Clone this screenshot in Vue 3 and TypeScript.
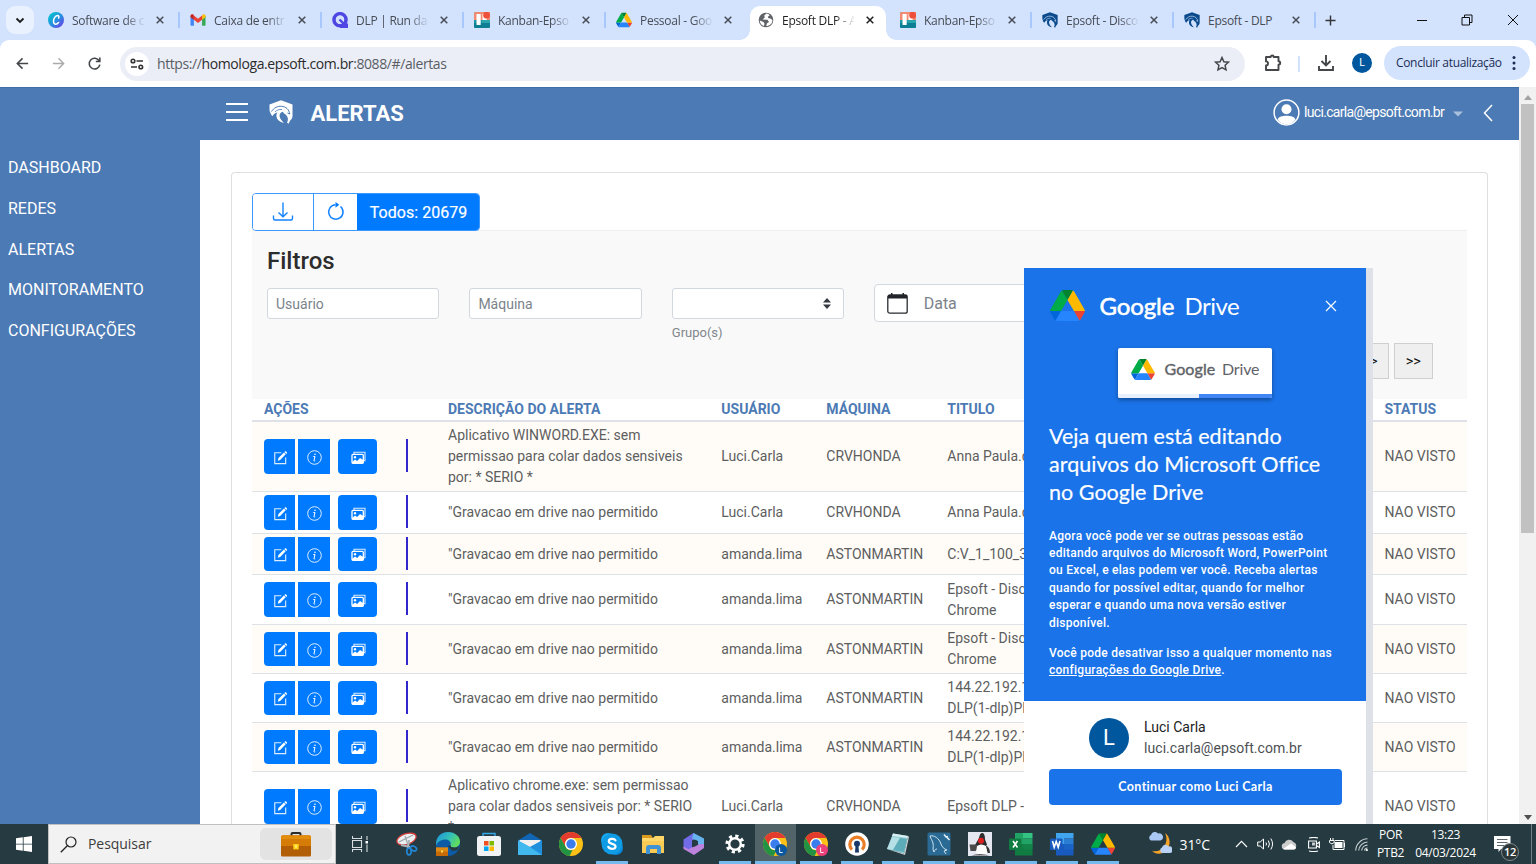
<script setup lang="ts">
interface Tab { title: string; icon: string; active?: boolean; sep?: boolean }
interface Row { h: number; desc: string[]; user: string; machine: string; title: string[] }
interface App { icon: string; open?: boolean; current?: boolean }

const svg = (box: string, body: string): string => `<svg viewBox="${box}" width="100%" height="100%" fill="none" style="display:block">${body}</svg>`

const driveBody =
  '<path d="M6.6 66.85l3.85 6.65c.8 1.4 1.95 2.5 3.3 3.3l13.75-23.8H0c0 1.55.4 3.1 1.2 4.5z" fill="#0066da"/>' +
  '<path d="M43.65 25L29.9 1.2c-1.35.8-2.5 1.9-3.3 3.3L1.2 48.5A9 9 0 0 0 0 53h27.5z" fill="#00ac47"/>' +
  '<path d="M73.55 76.8c1.35-.8 2.5-1.9 3.3-3.3l1.6-2.75 7.65-13.25c.8-1.4 1.2-2.95 1.2-4.5H59.8l5.85 11.5z" fill="#ea4335"/>' +
  '<path d="M43.65 25L57.4 1.2C56.05.4 54.5 0 52.9 0H34.4c-1.6 0-3.15.45-4.5 1.2z" fill="#00832d"/>' +
  '<path d="M59.8 53H27.5L13.75 76.8c1.35.8 2.9 1.2 4.5 1.2h50.8c1.6 0 3.15-.45 4.5-1.2z" fill="#2684fc"/>' +
  '<path d="M73.4 26.5L60.7 4.5c-.8-1.4-1.95-2.5-3.3-3.3L43.65 25 59.8 53h27.45c0-1.55-.4-3.1-1.2-4.5z" fill="#ffba00"/>'
const drive = svg('0 0 87.3 78', driveBody)
const driveSquare = svg('0 -4.6 87.3 87.3', driveBody)

const logo = (shield: string, lines: string): string => svg('0 0 24 24',
  `<path d="M.5 4.500L12 .3l11.500 4.200v11.500c0 2-1.300 3.600-2.300 4.400L19.600 23.700 18 22.500c1.300-2 1.200-4.300 0-6.300-1.200-2-3.300-2.600-4.200-4.400-2 .5-3.400 2-3.200 4.200.2 3 2.400 4.700 4.200 7-4-.9-7.200-3.300-7.400-7 0-1.500.4-2.600 1-3.500-2.300.3-3.700 1.700-5 3.800C2.700 15 1.800 14.500 1.500 13 .6 11.500.5 10 .5 8.500z" fill="${shield}"/>` +
  `<path d="M2.500 11.500C5 7.800 8.500 6 12.500 6.300c4.500.3 7.500 3.200 8.300 7.700l-2.300-1" stroke="${lines}" stroke-width="1"/><path d="M6 12C8 9.800 10 9.300 13 9.500" stroke="${lines}" stroke-width=".8"/>`)
const logoNavy = logo('#0b4a8c', '#d3e3fd')
const logoWhite = logo('#ffffff', '#4c7ab4')

const trello = svg('0 0 16 16',
  '<rect width="16" height="16" rx="1.500" fill="#1b9aa5"/><path d="M0 1.500Q0 0 1.500 0H16v8H0z" fill="#f28b71"/><path d="M0 11h16v3.500q0 1.500-1.500 1.500h-13Q0 16 0 14.500z" fill="#0d7f94"/><path d="M8 8h8v3H8z" fill="#2aa5ac"/><rect x="2.500" y="2" width="4.200" height="11" rx=".5" fill="#fff"/><rect x="8.500" y="2" width="4.200" height="6" rx=".5" fill="#fff"/><circle cx="12.600" cy="3.200" r="3.400" fill="#ee4f3b"/>')
const globe = svg('0 0 16 16',
  '<circle cx="8" cy="8" r="7.300" fill="#5f6368"/><path d="M8.500 1.500L6.200 3.600l.6 1.800L4.500 7.500l5 .3 1.500 2.200-2.200 1.500-.5 2.500C12 14 14.500 11 14.400 8l-2-1.500-2-.3-.5-1.500 1.800-1.500C10.800 2 9.800 1.600 8.500 1.500zM1.700 8.500l3.800 1.500 1 1.800-.5 2.200C3.500 13.200 1.800 11 1.700 8.500z" fill="#fff"/>')
const canva = svg('0 0 16 16',
  '<defs><linearGradient id="cv" x1="0" y1="0" x2="1" y2="1"><stop offset=".1" stop-color="#00c4cc"/><stop offset=".55" stop-color="#2a8be0"/><stop offset="1" stop-color="#7d2ae8"/></linearGradient></defs><circle cx="8" cy="8" r="8" fill="url(#cv)"/><path d="M10.600 6.200c.6-1.200.3-2.600-.8-2.600C7.500 3.600 5.400 6.500 5.500 9.300c.1 3.700 3.200 3.500 5.100 1.200" stroke="#fff" stroke-width="1.500" stroke-linecap="round"/>')
const gmail = svg('0 0 16 16',
  '<path d="M.5 4v9q0 .8.8.8h2.600V6.500z" fill="#4285f4"/><path d="M12.100 6.500v7.300h2.600q.8 0 .8-.8V4z" fill="#34a853"/><path d="M12.100 3.600v4.200L15.500 5.200V4c0-1.600-1.700-2.300-2.800-1.400z" fill="#fbbc04"/><path d="M3.900 7.800V3.600L8 6.700l4.100-3.100v4.200L8 10.900z" fill="#ea4335"/><path d="M.5 4v1.200l3.400 2.600V3.600l-.6-1C2.200 1.700.5 2.400.5 4z" fill="#c5221f"/>')
const runQ = svg('0 0 16 16',
  '<circle cx="8" cy="7.700" r="6" stroke="#5046e4" stroke-width="3.600"/><path d="M8 11.500h8V16h-8z" fill="#5046e4"/><circle cx="8" cy="7.700" r="4.200" fill="#d3e3fd"/><path d="M7.500 7.500l4 4" stroke="#5046e4" stroke-width="2.400"/>')

const tabs: Tab[] = [
  { title: 'Software de c', icon: canva, sep: true },
  { title: 'Caixa de entr', icon: gmail, sep: true },
  { title: 'DLP | Run das', icon: runQ, sep: true },
  { title: 'Kanban-Epso', icon: trello, sep: true },
  { title: 'Pessoal - Goo', icon: driveSquare },
  { title: 'Epsoft DLP - A', icon: globe, active: true },
  { title: 'Kanban-Epso', icon: trello, sep: true },
  { title: 'Epsoft - Disco', icon: logoNavy, sep: true },
  { title: 'Epsoft - DLP', icon: logoNavy, sep: true },
]

const menu: string[] = ['DASHBOARD', 'REDES', 'ALERTAS', 'MONITORAMENTO', 'CONFIGURAÇÕES']

const drv = ['"Gravacao em drive nao permitido']
const rows: Row[] = [
  { h: 70, desc: ['Aplicativo WINWORD.EXE: sem', 'permissao para colar dados sensiveis', 'por: * SERIO *'], user: 'Luci.Carla', machine: 'CRVHONDA', title: ['Anna Paula.docx'] },
  { h: 42, desc: drv, user: 'Luci.Carla', machine: 'CRVHONDA', title: ['Anna Paula.docx'] },
  { h: 41, desc: drv, user: 'amanda.lima', machine: 'ASTONMARTIN', title: ['C:V_1_100_3'] },
  { h: 50, desc: drv, user: 'amanda.lima', machine: 'ASTONMARTIN', title: ['Epsoft - Discover', 'Chrome'] },
  { h: 49, desc: drv, user: 'amanda.lima', machine: 'ASTONMARTIN', title: ['Epsoft - Discover', 'Chrome'] },
  { h: 49, desc: drv, user: 'amanda.lima', machine: 'ASTONMARTIN', title: ['144.22.192.1', 'DLP(1-dlp)PDF'] },
  { h: 49, desc: drv, user: 'amanda.lima', machine: 'ASTONMARTIN', title: ['144.22.192.1', 'DLP(1-dlp)PDF'] },
  { h: 70, desc: ['Aplicativo chrome.exe: sem permissao', 'para colar dados sensiveis por: * SERIO', '*'], user: 'Luci.Carla', machine: 'CRVHONDA', title: ['Epsoft DLP -'] },
]

const chromeBody =
  '<circle cx="12" cy="12" r="12" fill="#fbc116"/><path d="M1.600 6A12 12 0 0 1 22.400 6H12a6 6 0 0 0-5.200 9z" fill="#e33b2e"/><path d="M1.600 6l5.200 9A6 6 0 0 0 13.500 18l-2.900 6A12 12 0 0 1 1.600 6z" fill="#229342"/><circle cx="12" cy="12" r="6" fill="#fff"/><circle cx="12" cy="12" r="4.700" fill="#3b7ded"/>'
const badge = (c: string): string => `<circle cx="18" cy="18" r="6" fill="${c}"/><path d="M16.600 15.500v5h3" stroke="#fff" stroke-width=".9"/>`
const office = (dark: string, a: string, b: string, c: string, d: string, mark: string): string => svg('0 0 24 24',
  `<path d="M6 1h8v11H6z" fill="${a}"/><path d="M14 1h9.500v5.500H14z" fill="${b}"/><path d="M14 6.500h9.500V12H14z" fill="${c}"/><path d="M6 12h17.500v11.500H6z" fill="${dark}"/><path d="M14 12h9.500v5.500H14z" fill="${d}"/><rect y="6.500" width="12.500" height="11.500" rx="1" fill="${dark}"/><path d="${mark}" stroke="#fff" stroke-width="1.600"/>`)

const apps: App[] = [
  { icon: svg('0 0 24 24', '<ellipse cx="11.500" cy="7" rx="10" ry="5.300" transform="rotate(-18 11.500 7)" fill="#eceff1" stroke="#d23b3b" stroke-width="1.300"/><path d="M4 10l14-7M10 4l3 9" stroke="#9aa3a8" stroke-width="1.200"/><path d="M6 13l9 2M14 8l-1 8" stroke="#aab4ba" stroke-width="2"/><ellipse cx="14" cy="19.500" rx="2.200" ry="3.300" stroke="#2287d6" stroke-width="1.700"/><ellipse cx="18.500" cy="16.500" rx="3.200" ry="2.200" transform="rotate(25 18.500 16.500)" stroke="#2287d6" stroke-width="1.700"/>') },
  { icon: svg('0 0 24 24', '<defs><linearGradient id="eg" x1="0" y1="0" x2="1" y2=".5"><stop stop-color="#1c8fe0"/><stop offset=".6" stop-color="#35c1b5"/><stop offset="1" stop-color="#5fdc60"/></linearGradient></defs><circle cx="12" cy="12" r="12" fill="#0d5aa7"/><path d="M0 12C0 4 6 0 12 0c7 0 12 4.500 12 9.500 0 4-3 6-6 6s-4-1.300-3.500-2.300C15.500 10 13 7.500 9.500 7.500 5 7.500 1 10 0 14z" fill="url(#eg)"/><path d="M14.500 13c-.5 1 .5 2.600 3.500 2.600 2 0 3.500-.6 4.700-1.900L22 18l-6 1-4-5z" fill="#263b41"/><rect y="15.500" width="12" height="8.500" rx=".5" fill="#c66b08"/><path d="M0 19.500h12V16q0-.5-.5-.5H0z" fill="#e08a16"/><rect x="5" y="18.500" width="2" height="2" fill="#ffe14a"/>') },
  { icon: svg('0 0 24 24', '<path d="M6 5V1.500h12V5" stroke="#35a8e8" stroke-width="1.400"/><rect y="4" width="24" height="20" rx="2.500" fill="#f0f2f3"/><path d="M7 9h4.500v4.500H7z" fill="#f25022"/><path d="M12.500 9H17v4.500h-4.500z" fill="#7fba00"/><path d="M7 14.500h4.500V19H7z" fill="#00a4ef"/><path d="M12.500 14.500H17V19h-4.500z" fill="#ffb900"/>') },
  { icon: svg('0 0 24 24', '<path d="M0 8.500L12 1l12 7.500V12H0z" fill="#1066b5"/><path d="M1.500 8h21v7h-21z" fill="#f0f0f0"/><path d="M0 8.500l12 6.500 12-6.500V23H0z" fill="#31aee8"/><path d="M0 23h24L12 15 0 8.500z" fill="#41b9ef"/><path d="M24 8.500V23L12 15z" fill="#2090dd"/>') },
  { icon: svg('0 0 24 24', chromeBody) },
  { icon: svg('0 0 24 24', '<circle cx="8" cy="8" r="7" fill="#17a9f2"/><circle cx="16" cy="16" r="7" fill="#0787d7"/><circle cx="12" cy="12" r="10.500" fill="#109ce5"/><path d="M15.500 8.400C14.500 6.300 8.800 6.300 8.800 9.200c0 3.500 6.700 1.800 6.700 5.200 0 3.200-6 3-7.200.4" stroke="#fff" stroke-width="2.200" stroke-linecap="round"/>'), open: true },
  { icon: svg('0 0 24 24', '<path d="M1 3h9l2 3h11v5H1z" fill="#d99a1e"/><path d="M1 6h11l2-2h9v17H1z" fill="#ffd768"/><path d="M1 9h22v12H1z" fill="#f9cb55"/><path d="M5 22v-6q0-3 3-3h9q3 0 3 3v6h-4v-5H9v5z" fill="#3f93d4"/>') },
  { icon: svg('0 0 24 24', '<path d="M11.500 1L17 4.500 10 8.500v8L6.500 18.500 1.500 15.500V7.500z" fill="#716be8"/><path d="M11.500 1L22 6.500v9l-6-3.300V9.500L10 6.500z" fill="#67b3ee"/><path d="M22 12v4l-10 7L1.500 17v-2.500l5 2.700L16 12.200z" fill="#bd83dc"/><path d="M10 9.500l3.500-1.700 2.500 1.500v3.500L12 15l-2-1.500z" fill="#263b41"/>') },
  { icon: svg('0 0 24 24', '<circle cx="12" cy="12" r="5.800" stroke="#fff" stroke-width="2.400"/><circle cx="12" cy="12" r="8" stroke="#fff" stroke-width="3.200" stroke-dasharray="3.140 3.140"/>'), open: true },
  { icon: svg('0 0 24 24', chromeBody + badge('#0b57a0')), open: true, current: true },
  { icon: svg('0 0 24 24', chromeBody + badge('#ec407a')), open: true },
  { icon: svg('0 0 24 24', '<circle cx="12" cy="12" r="11.800" fill="#fff"/><path d="M7 17.500a7.200 7.200 0 1 1 10 0" stroke="#ea7e26" stroke-width="3.200"/><circle cx="12" cy="11.800" r="3" fill="#1a3967"/><path d="M10.600 13h2.800l.6 7.500h-4z" fill="#1a3967"/>'), open: true },
  { icon: svg('0 0 24 24', '<path d="M7 1.500L22 4l-4 17.500L1 17z" fill="#8ccbd5"/><path d="M7 1.500L22 4l-.5 2L6 4z" fill="#d8eef0"/><path d="M6 5l8 1-7 12-6-1z" fill="#b5e0e6"/><path d="M14 6l7 1-3 13-11-2z" fill="#5cacba"/><path d="M1 17l17 4.500L22 4l1 1-4 18z" fill="#c9d3d5"/>'), open: true },
  { icon: svg('0 0 24 24', '<rect x=".5" y=".5" width="23" height="23" rx="1.500" fill="#2a6a94"/><path d="M3 4c4-1 9 2 11 8 1 3 3 5 6 6l-3 1 2 3M3 4c1 3 2 4 3 7 1 4-1 6 1 9 1-2 1-3 3-3" stroke="#cde3ef" stroke-width="1"/><path d="M17 2.500l2 2.500 2-.5M19.500 5l3 3" stroke="#e5f1f8" stroke-width="1.500"/>'), open: true },
  { icon: svg('0 0 24 24', '<rect width="24" height="24" fill="#e4e6f0"/><path d="M11 6q1-5.500 3.500-5T17 7.500l2 5-3 4H9L7 13z" fill="#2c2c2c"/><path d="M1.500 12.500h7l2 3.500-3 3h-5z" fill="#4a4a4a"/><path d="M17 13q5 2 5 8h-2.500z" fill="#333"/><path d="M9 14q4-3 9 0l1.500 7q-5.500 3-11.500 0z" fill="#fbfbfb"/><circle cx="13" cy="8.800" r="3" fill="#df2020"/><path d="M3 23.500q9-3 18 0z" fill="#555"/>'), open: true },
  { icon: office('#107c41', '#21a366', '#33c481', '#21a366', '#13834a', 'M4 9l4.500 6.500M8.500 9L4 15.500'), open: true },
  { icon: office('#185abd', '#41a5ee', '#41a5ee', '#2b7cd3', '#1b63c4', 'M2.500 9l1.700 6.300L6.200 9.500l2 5.800L10 9'), open: true },
  { icon: driveSquare, open: true },
]
</script>

<template>
  <div class="screen">
    <header class="tabstrip">
      <div class="tab-search"><svg width="10" height="7" viewBox="0 0 10 7"><path d="M1.500 1.500L5 5l3.500-3.500" fill="none" stroke="#1f1f1f" stroke-width="1.900" /></svg></div>
      <div v-for="(t, i) in tabs" :key="i" class="tab" :class="{ active: t.active, sep: t.sep }">
        <span class="fav" v-html="t.icon"></span>
        <span class="tab-title" :class="{ whole: i === tabs.length - 1 }">{{ t.title }}</span>
        <svg class="tab-x" viewBox="0 0 8 8"><path d="M.7.7l6.600 6.600M7.300.7L.7 7.300" stroke="currentColor" stroke-width="1.500" /></svg>
      </div>
      <svg class="plus" viewBox="0 0 12 12"><path d="M6 .5v11M.5 6h11" stroke="#35373b" stroke-width="1.600" /></svg>
      <div class="wins">
        <svg viewBox="0 0 12 12"><path d="M1 6.500h10" stroke="#111" /></svg>
        <svg viewBox="0 0 12 12"><path d="M1 3.500h7.500V11H1zM3.500 3V1H11v7.500H9" fill="none" stroke="#111" /></svg>
        <svg viewBox="0 0 12 12"><path d="M1 1l10 10M11 1L1 11" stroke="#111" /></svg>
      </div>
    </header>

    <div class="toolbar">
      <svg class="nav" viewBox="0 0 16 16"><path d="M14 8H3M8 2.500L2.500 8 8 13.500" fill="none" stroke="#44474a" stroke-width="1.700" /></svg>
      <svg class="nav" viewBox="0 0 16 16"><path d="M2 8h11M8 2.500L13.500 8 8 13.500" fill="none" stroke="#aaa" stroke-width="1.500" /></svg>
      <svg class="nav" viewBox="0 0 16 16"><path d="M13 5.200A5.700 5.700 0 1 0 13.700 9.200M13.700 1.500v4.300H9.400" fill="none" stroke="#44474a" stroke-width="1.700" /></svg>
      <div class="omnibox">
        <span class="site"><svg width="14" height="12" viewBox="0 0 14 12"><g fill="none" stroke="#333" stroke-width="1.600"><circle cx="3" cy="3" r="1.800" /><path d="M6.500 3H13M1 9h6" /><circle cx="10.800" cy="9" r="1.800" /></g></svg></span>
        <span class="url">https://<b>homologa.epsoft.com.br</b>:8088/#/alertas</span>
        <svg class="star" viewBox="0 0 16 16"><path d="M8 1.500l1.900 4.200 4.600.5-3.400 3.100.9 4.500L8 11.500l-4 2.300.9-4.500L1.500 6.200l4.600-.5z" fill="none" stroke="#44474a" stroke-width="1.500" /></svg>
      </div>
      <svg class="puzzle" viewBox="0 0 18 18"><path d="M2 3h4.700a1.500 1.500 0 0 1 3 0H14.500v4.300a1.700 1.700 0 0 1 0 3.400v5.300H2v-4.600a2 2 0 0 0 0-4z" fill="none" stroke="#44474a" stroke-width="1.900" stroke-linejoin="round" /></svg>
      <i class="tsep"></i>
      <svg class="dl" viewBox="0 0 18 18"><path d="M9 1v10M4.500 7L9 11.500 13.500 7M2 12v4h14v-4" fill="none" stroke="#44474a" stroke-width="1.900" /></svg>
      <span class="me">L</span>
      <div class="update"><span>Concluir atualização</span><svg width="4" height="16" viewBox="0 0 4 16" fill="#1b2d55"><circle cx="2" cy="2.500" r="1.500" /><circle cx="2" cy="8" r="1.500" /><circle cx="2" cy="13.500" r="1.500" /></svg></div>
    </div>

    <div class="page">
      <nav class="side"><a v-for="m in menu" :key="m">{{ m }}</a></nav>
      <div class="main">
        <header class="top">
          <svg class="burger" viewBox="0 0 22 20"><path d="M.5 2h21M.5 10h21M.5 18h21" stroke="#fff" stroke-width="1.800" stroke-linecap="round" /></svg>
          <span class="brand" v-html="logoWhite"></span>
          <h1>ALERTAS</h1>
          <div class="user">
            <svg width="27" height="27" viewBox="0 0 27 27"><circle cx="13.500" cy="13.500" r="12.400" fill="none" stroke="#fff" stroke-width="1.500" /><circle cx="13.500" cy="10.200" r="5" fill="#fff" /><path d="M4.500 20.500C6 17.500 9 16.800 13.500 16.800s7.500.7 9 3.700C20 24 17 25.200 13.500 25.200S7 24 4.500 20.500z" fill="#fff" /></svg>
            <span>luci.carla@epsoft.com.br</span>
            <svg class="caret" viewBox="0 0 10 6"><path d="M0 .5h10L5 5.500z" fill="#a9c0dc" /></svg>
            <svg class="back" viewBox="0 0 10 18"><path d="M9 1L1.500 9 9 17" fill="none" stroke="#fff" stroke-width="1.500" /></svg>
          </div>
        </header>

        <div class="content">
          <section class="card">
            <div class="group">
              <button class="b1"><svg width="22" height="20" viewBox="0 0 22 20"><path d="M11 .5v14M6.500 10.500l4.500 4.200 4.500-4.200M1.500 13.500v3q0 1.500 1.500 1.500h16q1.500 0 1.500-1.500v-3" fill="none" stroke="#1583ff" stroke-width="1.400" /></svg></button>
              <button class="b2"><svg width="18" height="20" viewBox="0 0 18 20"><path d="M13.500 4.500A7.200 7.200 0 1 1 8.500 2.800" fill="none" stroke="#1583ff" stroke-width="1.500" /><path d="M8.500 0l3.800 2.800-3.800 3z" fill="#007bff" /></svg></button>
              <button class="b3">Todos: 20679</button>
            </div>
            <div class="filters">
              <h2>Filtros</h2>
              <div class="fields">
                <div class="field"><div class="inp">Usuário</div></div>
                <div class="field"><div class="inp">Máquina</div></div>
                <div class="field"><div class="inp sel"><svg width="8" height="11" viewBox="0 0 8 11" fill="#343a40"><path d="M0 4.600L4 0l4 4.600zM0 6.400L4 11l4-4.600z" /></svg></div><small>Grupo(s)</small></div>
                <div class="date"><svg width="21" height="21" viewBox="0 0 21 21"><rect x=".8" y="2" width="19.400" height="18.200" rx="2" fill="none" stroke="#292d31" stroke-width="1.300" /><path d="M1 2h19v3.500H1zM4 0h1.500v2H4zM15.500 0H17v2h-1.500z" fill="#212529" /></svg><span>Data</span></div>
              </div>
              <div class="pager"><button class="next">&gt;</button><button>&gt;&gt;</button></div>
            </div>

            <div class="thead grid"><span>AÇÕES</span><span></span><span>DESCRIÇÃO DO ALERTA</span><span>USUÁRIO</span><span>MÁQUINA</span><span>TITULO</span><span>STATUS</span></div>
            <div v-for="(r, i) in rows" :key="i" class="tr grid" :class="{ odd: i % 2 === 0 }" :style="{ height: r.h + 'px' }">
              <div class="acts">
                <button class="a1"><svg width="14" height="14" viewBox="0 0 16 16"><path d="M9.500 2H2v12.500h12.500V7.500" fill="none" stroke="#dcecff" stroke-width="1.300" /><path d="M5.500 11l.7-2.900 6.300-6.300 2 2-6.300 6.400zM13 1.200l.9-.9q.4-.3.7 0L16 1.700q.3.400 0 .8l-.9.900z" fill="#fff" /></svg></button>
                <button class="a2"><svg width="15" height="15" viewBox="0 0 15 15"><circle cx="7.500" cy="7.500" r="6.800" fill="none" stroke="#dcecff" /><path d="M6.300 6.500h1.700L7 10.600q0 .8 1.200.3" fill="none" stroke="#fff" /><circle cx="8" cy="4.200" r=".8" fill="#fff" /></svg></button>
                <button class="a3"><svg width="15" height="14" viewBox="0 0 15 14"><path d="M3 3V1.300h11v8.500h-1.500" fill="none" stroke="#dcecff" stroke-width="1.100" /><rect x="1" y="3.300" width="11.300" height="9" rx="1" fill="none" stroke="#fff" stroke-width="1.300" /><circle cx="4" cy="6.200" r="1.200" fill="#fff" /><path d="M1 11l3-2.500 2.200 1.500L9 7l3.500 2.300v3H1z" fill="#fff" /></svg></button>
              </div>
              <i class="bar"></i>
              <div><p v-for="l in r.desc" :key="l">{{ l }}</p></div>
              <p>{{ r.user }}</p>
              <p>{{ r.machine }}</p>
              <div><p v-for="l in r.title" :key="l">{{ l }}</p></div>
              <p>NAO VISTO</p>
            </div>
          </section>
        </div>
      </div>
      <aside class="scroll">
        <svg viewBox="0 0 8 5"><path d="M0 5h8L4 0z" fill="#a3a3a3" /></svg>
        <i></i>
        <svg class="down" viewBox="0 0 8 5"><path d="M0 0h8L4 5z" fill="#505050" /></svg>
      </aside>
    </div>

    <div class="popup">
      <div class="pop-blue">
        <div class="pop-head">
          <span class="dlogo" v-html="drive"></span>
          <span class="gd"><b>Google</b><span>Drive</span></span>
          <svg width="12" height="12" viewBox="0 0 12 12"><path d="M1 1l10 10M11 1L1 11" stroke="#fff" stroke-width="1.200" /></svg>
        </div>
        <div class="mini">
          <div class="mini-in"><span class="mlogo" v-html="drive"></span><span class="mgd"><b>Google</b><span>Drive</span></span></div>
          <i></i>
        </div>
        <h3>Veja quem está editando<br>arquivos do Microsoft Office<br>no Google Drive</h3>
        <p class="l1"><span>Agora você pode ver se outras pessoas estão</span><span>editando arquivos do Microsoft Word, PowerPoint</span><span>ou Excel, e elas podem ver você. Receba alertas</span><span>quando for possível editar, quando for melhor</span><span>esperar e quando uma nova versão estiver</span><span>disponível.</span></p>
        <p class="l2"><span>Você pode desativar isso a qualquer momento nas</span><span><u>configurações do Google Drive</u>.</span></p>
      </div>
      <div class="pop-user">
        <span class="avatar">L</span>
        <div><div class="nm">Luci Carla</div><div class="em">luci.carla@epsoft.com.br</div></div>
      </div>
      <button class="cont">Continuar como Luci Carla</button>
    </div>

    <footer class="taskbar">
      <div class="start"><svg width="16" height="16" viewBox="0 0 16 16" fill="#fff"><path d="M0 2.300L6.800 1.300v6.400H0zM7.600 1.200L16 0v7.700H7.600zM0 8.400h6.800v6.400L0 13.800zM7.600 8.400H16V16l-8.400-1.200z" /></svg></div>
      <div class="search">
        <svg width="17" height="17" viewBox="0 0 17 17"><circle cx="11" cy="6" r="5" fill="none" stroke="#222" stroke-width="1.200" /><path d="M7.300 9.700L.8 16.200" stroke="#222" stroke-width="1.300" /></svg>
        <span>Pesquisar</span>
        <div class="case"><svg width="30" height="25" viewBox="0 0 30 25"><path d="M10.500 4V2q0-1 1-1h7q1 0 1 1v2" fill="none" stroke="#2b2b2b" stroke-width="2" /><rect y="3.500" width="30" height="21" rx="1.500" fill="#b25e06" /><path d="M0 14h30V5q0-1.500-1.500-1.500h-27Q0 3.500 0 5z" fill="#d57c07" /><path d="M0 7h30V5q0-1.500-1.500-1.500h-27Q0 3.500 0 5z" fill="#e38d0c" /><rect x="12.300" y="12" width="5.400" height="5.400" fill="#ffd21c" /><rect x="14" y="13.500" width="2" height="2" fill="#fff27a" /></svg></div>
      </div>
      <div class="tview"><svg width="16" height="16" viewBox="0 0 16 16"><path d="M.5 0v2.500h9V0M.5 16v-2.500h9V16M.5 4.500h9v7h-9zM15 0v4M15 8.500V16" fill="none" stroke="#d9dddf" stroke-width="1.100" /><rect x="13.500" y="5" width="2.500" height="2.500" fill="#fff" /></svg></div>
      <div v-for="(a, i) in apps" :key="i" class="app" :class="{ open: a.open, current: a.current }"><span v-html="a.icon"></span></div>
      <div class="tray">
        <svg class="w1" viewBox="0 0 24 24"><path d="M17 1c6 4 6 13 1 18-5 4-11 3-14 0 6 1 10-1 12.500-5S19 5 17 1z" fill="#f7a325" /><path d="M3 8.500a3 3 0 0 1 0-5.500 4 4 0 0 1 7-1.500 3.600 3.600 0 0 1 2.500 7z" fill="#a9c8f3" /><path d="M14 21a3 3 0 0 1 0-5.500 3.500 3.500 0 0 1 6.500-1 3.300 3.300 0 0 1 1.500 6.500z" fill="#b9d2f6" /></svg>
        <span class="temp">31°C</span>
        <svg class="w2" viewBox="0 0 12 8"><path d="M.5 7L6 1.300 11.500 7" fill="none" stroke="#fff" stroke-width="1.100" /></svg>
        <svg class="w3" viewBox="0 0 17 14"><path d="M.7 5h2.500L6.500 2v10L3.200 9H.7zM9 5.500q1 1.500 0 3M11.300 3.500q2.300 3.500 0 7M13.800 1.500q3.500 5.500 0 11" fill="none" stroke="#fff" stroke-width="1" /></svg>
        <svg class="w4" viewBox="0 0 16 11"><path d="M3.500 10.500a3.300 3.300 0 0 1 0-6.500 5 5 0 0 1 8.800-1 4 4 0 0 1 .7 7.500z" fill="#ccc" /><path d="M2 10l8-5.500 5 4q0 2-2 2H3.500z" fill="#fff" /></svg>
        <svg class="w5" viewBox="0 0 12 15"><path d="M1 1q5-1.200 9 0M1 14q5 1.200 9 0M.6 4h7.800v7H.6zM8.500 7l2.900-2v5.500L8.500 8.500" fill="none" stroke="#fff" stroke-width="1.100" /><path d="M4 5.500h3v3H4z" fill="#c7ced0" /></svg>
        <svg class="w6" viewBox="0 0 16 12"><path d="M5.500 4h8v6h-8z" fill="#fff" /><path d="M6 2.500h9v9H4V7M1.500 0v2.500M4 0v2.500M.5 2.500h4.700v2L3 6 .5 4.500z" fill="none" stroke="#fff" /><path d="M15.500 5v4" stroke="#fff" /></svg>
        <svg class="w7" viewBox="0 0 13 13"><path d="M.7 12.500A12 12 0 0 1 12.500.8M3.700 12.500a9 9 0 0 1 8.800-8.500M6.700 12.500a6 6 0 0 1 5.800-5.400M9.500 12.500a3 3 0 0 1 3-2.500" fill="none" stroke="#c8d0d2" stroke-width="1.100" /><circle cx="11.800" cy="12" r="1.100" fill="#fff" /></svg>
        <div class="two lang"><span>POR</span><span>PTB2</span></div>
        <div class="two clock"><span>13:23</span><span>04/03/2024</span></div>
        <div class="note"><svg width="17" height="16" viewBox="0 0 17 16"><path d="M0 0h16.500v13H7l-2.500 3v-3H0z" fill="#fff" /><path d="M3 3.500h10.500M3 6.500h10.500M3 9.500h7" stroke="#5a6669" /></svg><span>12</span></div>
      </div>
    </footer>
  </div>
</template>

<style>
body { margin: 0; overflow: hidden; }
</style>

<style scoped>
* { box-sizing: border-box; }
p, h1, h2, h3 { margin: 0; }
svg { display: block; flex: none; }
button { font: inherit; border: 0; padding: 0; margin: 0; display: flex; align-items: center; justify-content: center; }
.screen { position: relative; width: 1536px; height: 864px; overflow: hidden; background: #fff; font-family: Roboto, "Liberation Sans", sans-serif; display: flex; flex-direction: column; }

.tabstrip { height: 40px; background: #d3e3fd; display: flex; align-items: center; flex: none; font-family: "Open Sans", "Noto Sans", sans-serif; }
.tab-search { width: 28px; height: 28px; margin: 0 4px 0 6px; border-radius: 9px; background: #e9f0fe; display: flex; align-items: center; justify-content: center; }
.tab { position: relative; width: 142px; height: 40px; padding-left: 10px; display: flex; align-items: center; flex: none; color: #474c55; }
.tab.sep::after { content: ""; position: absolute; right: 0; top: 12px; width: 2px; height: 16px; background: #a8c7fa; }
.tab.active { color: #1f1f1f; }
.tab.active::before { content: ""; position: absolute; left: 2px; right: 4px; top: 6px; bottom: 0; background: #fff; border-radius: 10px 10px 0 0; }
.tab.active::after { content: ""; position: absolute; left: -8px; right: -6px; bottom: 0; height: 10px; background: radial-gradient(circle at 0 0, transparent 9.500px, #fff 10px) left / 10px 10px no-repeat, radial-gradient(circle at 100% 0, transparent 9.500px, #fff 10px) right / 10px 10px no-repeat; }
.fav { position: relative; z-index: 1; width: 16px; height: 16px; margin-right: 8px; flex: none; }
.tab-title { position: relative; z-index: 1; width: 72px; height: 18px; line-height: 18px; margin-top: 2px; font-size: 12px; letter-spacing: -0.270px; white-space: nowrap; flex: none; -webkit-mask-image: linear-gradient(90deg, #000 74%, transparent 102%); mask-image: linear-gradient(90deg, #000 74%, transparent 102%); }
.tab-title.whole { -webkit-mask-image: none; mask-image: none; }
.tab-x { position: relative; z-index: 1; width: 8px; height: 8px; margin-left: 12px; }
.plus { width: 11px; height: 11px; margin-left: 9px; }
.wins { margin-left: auto; display: flex; gap: 33.500px; padding-right: 17.500px; }
.wins svg { width: 12px; height: 12px; }

.toolbar { height: 47px; flex: none; display: flex; align-items: center; background: linear-gradient(#d3e3fd 10px, #fff 10px); position: relative; }
.toolbar::before { content: ""; position: absolute; inset: 0; background: #fff; border-radius: 9px 9px 0 0; }
.toolbar > * { position: relative; }
.nav { width: 15px; height: 15px; margin-left: 14.500px; margin-right: 6.500px; margin-top: -1px; }
.omnibox { width: 1125px; height: 34px; margin-left: 12px; border-radius: 17px; background: #ebeef7; display: flex; align-items: center; padding: 0 15px 0 5px; flex: none; }
.site { width: 24px; height: 24px; border-radius: 50%; background: #fff; display: flex; align-items: center; justify-content: center; }
.url { margin-left: 8px; font: 14px/20px "Open Sans", "Noto Sans", sans-serif; letter-spacing: -0.400px; color: #5a5e64; flex: 1; white-space: nowrap; }
.url b { font-weight: 400; color: #2b2b2b; }
.star { width: 16px; height: 16px; }
.puzzle { width: 18px; height: 18px; margin-left: 19px; margin-top: -1px; }
.tsep { width: 2px; height: 16px; background: #d3e3fd; margin-left: 16px; }
.dl { width: 18px; height: 18px; margin-left: 17px; margin-top: -1px; }
.me { width: 20px; height: 20px; margin-left: 17px; border-radius: 50%; background: #00579d; color: #fff; font-size: 10.500px; line-height: 20px; text-align: center; margin-top: -1px; }
.update { width: 146px; height: 34px; margin-left: 12px; border-radius: 17px; background: #d3e3fd; display: flex; align-items: center; justify-content: space-between; padding: 0 14px 0 12px; font: 12px/16px "Open Sans", "Noto Sans", sans-serif; letter-spacing: -0.330px; color: #1b2d55; white-space: nowrap; margin-top: -1px; }

.page { height: 737px; flex: none; display: flex; }
.side { width: 200px; background: #4c7ab4; padding-top: 60px; display: flex; flex-direction: column; box-shadow: inset 0 1px #3e6fa9; }
.side a { height: 40.800px; line-height: 41px; padding-left: 8px; color: #fff; font-size: 16px; }
.main { width: 1319px; display: flex; flex-direction: column; }
.top { height: 53px; background: #4c7ab4; display: flex; align-items: center; padding-left: 26px; flex: none; box-shadow: inset 0 1px #3e6fa9; }
.burger { width: 22px; height: 20px; margin-top: -4px; }
.brand { width: 24px; height: 24px; margin: -4px 0 0 21px; }
h1 { font-size: 22px; line-height: 28px; font-weight: 700; color: #fff; margin-left: 17.500px; }
.user { margin-left: auto; display: flex; align-items: center; color: #fff; font-size: 14px; padding-right: 26px; margin-top: -3px; }
.user span { margin-left: 4.500px; letter-spacing: -0.680px; width: 141px; white-space: nowrap; }
.caret { width: 10px; height: 6px; margin: 3px 0 0 8px; }
.back { width: 10px; height: 18px; margin: 2px 0 0 20px; }
.content { flex: 1; min-height: 0; overflow: hidden; padding: 32px 31px 0; }
.card { border: 1px solid #dfdfe2; border-bottom: 0; border-radius: 4px 4px 0 0; height: 720px; padding: 20px; }
.group { display: flex; height: 38px; width: 228px; border: 1px solid #3c98ff; border-radius: 4px; overflow: hidden; margin-bottom: -1px; position: relative; z-index: 1; }
.group button { background: #fff; }
.group .b1 { width: 61px; border-right: 1px solid #3c98ff; }
.group .b2 { width: 43px; padding: 0 0 1px; }
.group .b3 { flex: 1; background: #007bff; color: #fff; font-size: 16px; letter-spacing: .05px; padding-left: 1px; -webkit-text-stroke: .2px #fff; }
.filters { height: 169px; background: #f9f9f9; border-top: 1px solid #efefef; padding: 16px 15px 0; }
h2 { font-size: 24px; line-height: 29px; font-weight: 500; color: #2d2d2d; }
.fields { display: flex; gap: 30px; margin-top: 8px; height: 59px; }
.field { width: 172.400px; padding-top: 4px; }
.inp { height: 31px; border: 1px solid #d3d8de; border-radius: 3px; background: #fff; font-size: 14px; line-height: 30px; padding-left: 8px; color: #7b838a; }
.sel { display: flex; align-items: center; justify-content: flex-end; padding-right: 12px; }
.field small { display: block; font-size: 13px; line-height: 16px; margin-top: 6px; color: #80868c; }
.date { width: 374px; height: 38px; border: 1px solid #d3d8de; border-radius: 4px; background: #fff; display: flex; align-items: center; gap: 15.500px; padding-left: 12px; font-size: 16px; color: #7b838a; }
.pager { display: flex; justify-content: flex-end; gap: 5.500px; padding-right: 19.500px; }
.pager button { width: 38.500px; height: 36px; background: #efefef; border: 1px solid #cfcfcf; font-size: 14.500px; color: #111; }
.pager .next { width: 29.500px; }
.grid { display: grid; grid-template-columns: 141px 43px 273.300px 105px 121px 437.200px 83px; padding-left: 12px; }
.thead { height: 23px; border-bottom: 2px solid #dee2e6; font-size: 14px; line-height: 21.500px; font-weight: 700; color: #4c7ab4; }
.tr { border-bottom: 1px solid #dee2e6; align-items: center; font-size: 14px; line-height: 20.700px; color: #5d5e60; white-space: nowrap; }
.tr.odd { background: #fffcf7; }
.acts { display: flex; height: 34.500px; }
.acts button { background: #007bff; padding: 2px 0 0; }
.acts .a1 { width: 31px; border-radius: 4px 0 0 4px; margin-right: 3.300px; }
.acts .a2 { width: 32px; margin-right: 7.700px; }
.acts .a3 { width: 39.500px; border-radius: 4px; padding-left: 1px; }
.bar { width: 2.500px; height: 33px; background: #3227cd; margin: 0 0 2px .5px; }

.scroll { width: 17px; background: #f1f1f1; display: flex; flex-direction: column; align-items: center; padding: 8px 0 4px; }
.scroll svg { width: 8px; height: 5px; }
.scroll i { width: 13px; height: 429px; margin-top: 4px; background: #c1c1c1; }
.scroll .down { margin-top: auto; }

.popup { position: absolute; left: 1024px; top: 268px; width: 349px; height: 556px; border-right: 7px solid #dfe1e8; background: #fff; }
.pop-blue { height: 433px; background: #1a73e8; color: #fff; padding: 21px 25px 0; }
.pop-head { display: flex; align-items: center; height: 34px; padding-right: 4px; }
.dlogo { width: 35px; height: 31px; margin: -2px 0 0 1px; }
.gd { margin: -1px 0 0 14.500px; font: 24px/30px Lato, sans-serif; flex: 1; display: flex; white-space: nowrap; }
.gd b { font-weight: 400; width: 85px; letter-spacing: -0.100px; -webkit-text-stroke: .6px #fff; }
.gd span { letter-spacing: -0.500px; }
.mini { width: 154px; height: 50px; margin: 25px auto 0 69px; background: #fff; border-radius: 2px; box-shadow: 0 2px 4px rgba(0, 0, 0, .35); display: flex; flex-direction: column; overflow: hidden; }
.mini-in { flex: 1; display: flex; align-items: center; padding: 0 0 4px 13px; }
.mlogo { width: 24px; height: 21px; }
.mgd { margin-left: 9.500px; color: #5f6368; font: 16px/20px Lato, sans-serif; display: flex; white-space: nowrap; }
.mgd b { font-weight: 400; width: 57.500px; letter-spacing: .1px; -webkit-text-stroke: .4px #5f6368; }
.mgd span { letter-spacing: -0.150px; }
.mini i { height: 4px; background: linear-gradient(90deg, #e8f0fe 81px, #4285f4 81px); }
h3 { font: 400 21.500px/28px Lato, sans-serif; letter-spacing: .03px; margin-top: 24px; white-space: nowrap; -webkit-text-stroke: .2px #fff; }
.l1, .l2 { font-size: 12px; line-height: 17.400px; font-weight: 500; letter-spacing: .26px; white-space: nowrap; }
.l1 span, .l2 span { display: block; }
.l1 { margin-top: 21.500px; }
.l2 { margin-top: 13px; }
.pop-user { display: flex; align-items: center; padding-left: 65px; margin-top: 16px; height: 41px; }
.avatar { width: 40px; height: 40px; border-radius: 50%; background: #00579d; color: #fff; font-size: 22px; line-height: 40px; text-align: center; margin-right: 15px; }
.nm, .em { font-size: 14px; line-height: 20.500px; color: #222; }
.em { color: #4c4f53; letter-spacing: .06px; }
.cont { width: 293px; height: 36px; margin: 11px 0 0 25px; border-radius: 4px; background: #1a73e8; color: #fff; font: 700 12.500px/16px Lato, sans-serif; letter-spacing: .33px; }

.taskbar { height: 40px; flex: none; background: #263b41; display: flex; position: relative; color: #fff; font-family: "Open Sans", "Noto Sans", sans-serif; }
.start { width: 48px; display: flex; align-items: center; justify-content: center; }
.search { width: 288px; background: #f2f2f2; border: 1px solid #bfc0c0; display: flex; align-items: center; padding: 0 3px 0 11px; color: #3d3d3d; font-size: 14px; letter-spacing: -0.050px; }
.search span { margin: -1px 0 0 11px; flex: 1; }
.case { width: 72px; height: 32px; border-radius: 6px; background: #e3e3e3; display: flex; align-items: center; justify-content: center; }
.tview { width: 51px; padding-left: 16px; display: flex; align-items: center; }
.app { width: 40.900px; display: flex; align-items: center; justify-content: center; position: relative; flex: none; }
.app span { width: 24px; height: 24px; }
.app.open::after { content: ""; position: absolute; left: 4.500px; right: 4.500px; bottom: 0; height: 3px; background: #76b9ed; }
.app.current { background: #536469; }
.app.current::after { left: 0; right: 0; }
.tray { flex: 1; display: flex; align-items: center; white-space: nowrap; padding-left: 24.500px; }
.w1 { width: 24px; height: 24px; }
.temp { font-size: 14px; width: 32px; margin-left: 8px; letter-spacing: -0.100px; }
.w2 { width: 13px; height: 8px; margin-left: 23px; }
.w3 { width: 17px; height: 14px; margin-left: 9.500px; }
.w4 { width: 16px; height: 11px; margin-left: 7px; }
.w5 { width: 12px; height: 15px; margin-left: 11px; }
.w6 { width: 16px; height: 12px; margin-left: 9px; }
.w7 { width: 13px; height: 13px; margin-left: 10px; }
.two { font-size: 12px; line-height: 18px; text-align: center; letter-spacing: -0.300px; display: flex; flex-direction: column; margin-top: 0; }
.lang { width: 30px; margin-left: 7.500px; }
.clock { width: 64px; margin-left: 8px; }
.note { position: relative; margin-left: 16.500px; width: 36px; height: 16px; }
.note span { position: absolute; left: 7px; top: 7px; width: 18px; height: 18px; border-radius: 50%; background: #2b3639; border: 1px solid #7d898c; font-size: 11px; font-weight: 600; line-height: 16px; text-align: center; letter-spacing: -0.300px; }
.taskbar::after { content: ""; position: absolute; right: 4px; top: 0; width: 1px; height: 40px; background: #738084; }
</style>
